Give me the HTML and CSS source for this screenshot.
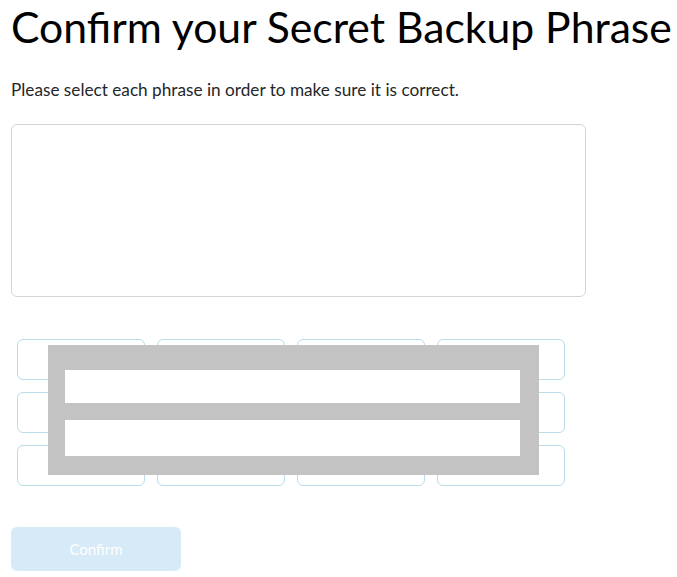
FILE: index.html
```html
<!DOCTYPE html>
<html>
<head>
<meta charset="utf-8">
<link rel="stylesheet" href="styles.css">
</head>
<body>
<div class="page">
  <h1 class="title">Confirm your Secret Backup Phrase</h1>
  <p class="subtitle">Please select each phrase in order to make sure it is correct.</p>
  <div class="selected-box"></div>
  <div class="grid-wrap">
    <div class="word-grid">
      <div class="tile"></div><div class="tile"></div><div class="tile"></div><div class="tile"></div>
      <div class="tile"></div><div class="tile"></div><div class="tile"></div><div class="tile"></div>
      <div class="tile"></div><div class="tile"></div><div class="tile"></div><div class="tile"></div>
    </div>
    <div class="mask">
      <div class="hole hole-top"></div>
      <div class="hole hole-bottom"></div>
    </div>
  </div>
  <button class="confirm-btn">Confirm</button>
</div>
</body>
</html>
```
FILE: styles.css
```css
* { box-sizing: border-box; }
html, body { margin: 0; padding: 0; background: #fff; }
body { font-family: "Lato", "Liberation Sans", sans-serif; color: #24272a; }
.page { padding: 0 0 0 11px; width: 677px; }
.title {
  margin: 0;
  padding-top: 2px;
  font-size: 42.7px;
  font-weight: 400;
  line-height: 50px;
  color: #000;
  white-space: nowrap;
}
.subtitle {
  margin: 28px 0 0;
  font-size: 17.2px;
  line-height: 20px;
  color: #24272a;
  white-space: nowrap;
}
.selected-box {
  margin-top: 24px;
  width: 575px;
  height: 173px;
  border: 1px solid #d3d6d9;
  border-radius: 6px;
}
.grid-wrap {
  position: relative;
  margin-top: 42px;
  margin-left: 6px;
  width: 548px;
}
.word-grid {
  display: grid;
  grid-template-columns: repeat(4, 128px);
  grid-auto-rows: 41px;
  column-gap: 12px;
  row-gap: 12px;
}
.tile {
  border: 1px solid #bcdbe9;
  border-radius: 6px;
}
.mask {
  position: absolute;
  left: 31px;
  top: 6px;
  width: 491px;
  height: 130px;
  background: #c3c3c3;
}
.hole { position: absolute; left: 17px; width: 455px; background: #fff; }
.hole-top { top: 25px; height: 33px; }
.hole-bottom { top: 75px; height: 36px; }
.confirm-btn {
  display: block;
  margin-top: 41px;
  width: 170px;
  height: 44px;
  border: none;
  border-radius: 6px;
  background: #d6eaf8;
  color: #fff;
  font-family: "Lato", "Liberation Sans", sans-serif;
  font-size: 15px;
}
```
